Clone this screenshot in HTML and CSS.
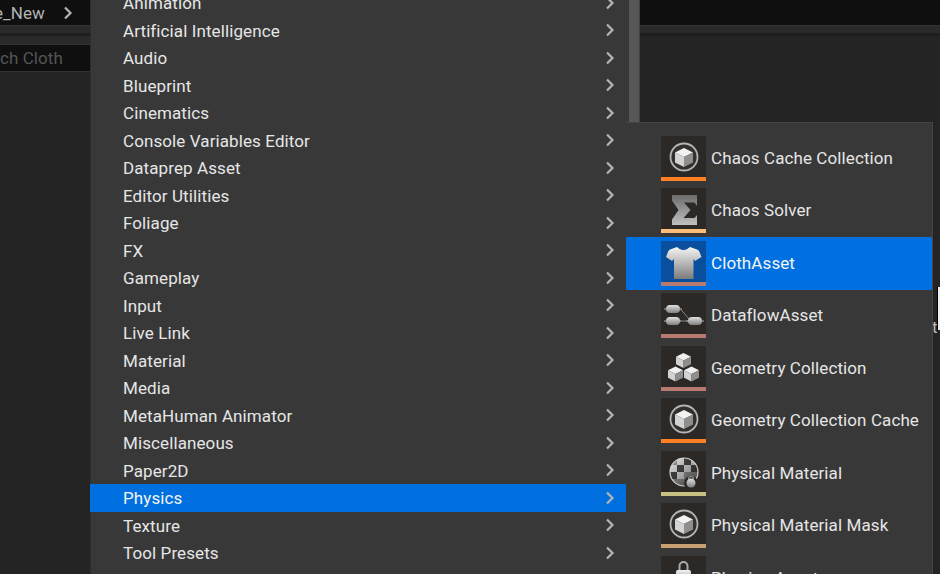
FILE: index.html
```html
<!DOCTYPE html>
<html lang="en">
<head>
<meta charset="UTF-8">
<title>Content Browser menu</title>
<link rel="stylesheet" href="styles.css">
</head>
<body>
<svg class="defs" width="0" height="0">
  <defs>
    <linearGradient id="grey" x1="0" y1="0" x2="0" y2="1">
      <stop offset="0" stop-color="#f4f4f4"/>
      <stop offset="1" stop-color="#7c7c7c"/>
    </linearGradient>
    <linearGradient id="sigma" x1="0" y1="0" x2="0" y2="1">
      <stop offset="0" stop-color="#6c6c6c"/>
      <stop offset="1" stop-color="#c0c0c0"/>
    </linearGradient>
    <linearGradient id="pill" x1="0" y1="0" x2="0" y2="1">
      <stop offset="0" stop-color="#e0e0e0"/>
      <stop offset="1" stop-color="#808080"/>
    </linearGradient>
    <linearGradient id="shade" x1="0" y1="0" x2="1" y2="1">
      <stop offset="0" stop-color="#000" stop-opacity="0"/>
      <stop offset="1" stop-color="#000" stop-opacity=".55"/>
    </linearGradient>
    <symbol id="chev" viewBox="0 0 10 14">
      <path d="M2 1.500 7.500 7 2 12.500" fill="none" stroke="#b4b4b4" stroke-width="2.200"/>
    </symbol>
    <symbol id="cube" viewBox="0 0 45 41">
      <circle cx="23" cy="21" r="13.500" fill="#34302e" stroke="#b4b4b4" stroke-width="1.800"/>
      <path d="M23 12 32 16.500 23 21 14 16.500Z" fill="#f2f2f2"/>
      <path d="M14 16.500 23 21V31L14 26.500Z" fill="#d4d4d4"/>
      <path d="M32 16.500 23 21V31L32 26.500Z" fill="#8e8e8e"/>
    </symbol>
    <symbol id="box" viewBox="1 1 14 14">
      <path d="M8 1 15 4.500 8 8 1 4.500Z" fill="#f0f0f0"/>
      <path d="M1 4.500 8 8V15L1 11.500Z" fill="#d2d2d2"/>
      <path d="M15 4.500 8 8V15L15 11.500Z" fill="#8e8e8e"/>
    </symbol>
  </defs>
</svg>

<div class="page">
  <div class="left-pane">
    <div class="path-bar"><span class="path-text">Cloth_Sample_New</span><svg class="path-chev"><use href="#chev"/></svg></div>
    <div class="strip"></div>
    <div class="search-wrap">
      <div class="search"><span>Search Cloth</span></div>
    </div>
  </div>
  <div class="gap"></div>
  <div class="right-pane">
    <div class="path-bar"></div>
    <div class="strip"></div>
    <div class="right-body">
      <div class="splitter"></div>
      <span class="clip-t">t</span>
    </div>
  </div>
</div>

<div class="menu">
  <div class="menu-list">
    <div class="row"><span>Animation</span><svg class="chev"><use href="#chev"/></svg></div>
    <div class="row"><span>Artificial Intelligence</span><svg class="chev"><use href="#chev"/></svg></div>
    <div class="row"><span>Audio</span><svg class="chev"><use href="#chev"/></svg></div>
    <div class="row"><span>Blueprint</span><svg class="chev"><use href="#chev"/></svg></div>
    <div class="row"><span>Cinematics</span><svg class="chev"><use href="#chev"/></svg></div>
    <div class="row"><span>Console Variables Editor</span><svg class="chev"><use href="#chev"/></svg></div>
    <div class="row"><span>Dataprep Asset</span><svg class="chev"><use href="#chev"/></svg></div>
    <div class="row"><span>Editor Utilities</span><svg class="chev"><use href="#chev"/></svg></div>
    <div class="row"><span>Foliage</span><svg class="chev"><use href="#chev"/></svg></div>
    <div class="row"><span>FX</span><svg class="chev"><use href="#chev"/></svg></div>
    <div class="row"><span>Gameplay</span><svg class="chev"><use href="#chev"/></svg></div>
    <div class="row"><span>Input</span><svg class="chev"><use href="#chev"/></svg></div>
    <div class="row"><span>Live Link</span><svg class="chev"><use href="#chev"/></svg></div>
    <div class="row"><span>Material</span><svg class="chev"><use href="#chev"/></svg></div>
    <div class="row"><span>Media</span><svg class="chev"><use href="#chev"/></svg></div>
    <div class="row"><span>MetaHuman Animator</span><svg class="chev"><use href="#chev"/></svg></div>
    <div class="row"><span>Miscellaneous</span><svg class="chev"><use href="#chev"/></svg></div>
    <div class="row"><span>Paper2D</span><svg class="chev"><use href="#chev"/></svg></div>
    <div class="row active"><span>Physics</span><svg class="chev"><use href="#chev"/></svg></div>
    <div class="row"><span>Texture</span><svg class="chev"><use href="#chev"/></svg></div>
    <div class="row"><span>Tool Presets</span><svg class="chev"><use href="#chev"/></svg></div>
  </div>
  <div class="scrollbar"></div>
</div>

<div class="submenu">
  <div class="asset">
    <div class="tile bar-orange"><svg class="art"><use href="#cube"/></svg></div>
    <span>Chaos Cache Collection</span>
  </div>
  <div class="asset">
    <div class="tile bar-peach">
      <svg class="art" viewBox="0 0 45 41">
        <path d="M11 7H36V18L33.500 14.500H23L29.500 22 22.500 30H33.500L36 27V37H11V31.500L17.500 22 11 12.500Z" fill="url(#sigma)"/>
      </svg>
    </div>
    <span>Chaos Solver</span>
  </div>
  <div class="asset active">
    <div class="tile tile-blue bar-rose">
      <svg class="art" viewBox="0 0 45 41">
        <path d="M16 6C19 9 26 9 29 6L36 8.500C37.500 9 38 10 38.500 11L40.500 16 34 20 32.500 18V38H13V18L11 20 5 16 7 11C7.500 10 8 9 9 8.500Z" fill="url(#grey)"/>
        <path d="M17 6C20 9.500 25 9.500 28 6" fill="none" stroke="#0b4f9e" stroke-width="1"/>
      </svg>
    </div>
    <span>ClothAsset</span>
  </div>
  <div class="asset">
    <div class="tile bar-rose">
      <svg class="art" viewBox="0 0 45 41">
        <path d="M19 15.500 29 27M18 28H28" fill="none" stroke="#8a8a8a" stroke-width="1"/>
        <path d="M3 16H21M3 28H20M25 28H43" stroke="#aaa" stroke-width="1.200"/>
        <rect x="5" y="12" width="14" height="8" rx="4" fill="url(#pill)"/>
        <rect x="5" y="24" width="14" height="8" rx="4" fill="url(#pill)"/>
        <rect x="27" y="24" width="14" height="8" rx="4" fill="url(#pill)"/>
      </svg>
    </div>
    <span>DataflowAsset</span>
  </div>
  <div class="asset">
    <div class="tile bar-rose">
      <svg class="art" viewBox="0 0 45 41">
        <use href="#box" x="15" y="7" width="15" height="15"/>
        <use href="#box" x="7" y="20" width="15" height="16"/>
        <use href="#box" x="23" y="20" width="15" height="16"/>
      </svg>
    </div>
    <span>Geometry Collection</span>
  </div>
  <div class="asset">
    <div class="tile bar-orange"><svg class="art"><use href="#cube"/></svg></div>
    <span>Geometry Collection Cache</span>
  </div>
  <div class="asset">
    <div class="tile bar-khaki">
      <svg class="art" viewBox="0 0 45 41">
        <clipPath id="ball"><circle cx="23" cy="21" r="14"/></clipPath>
        <g clip-path="url(#ball)">
          <rect x="9" y="7" width="28" height="28" fill="#9a9a9a"/>
          <path d="M16 7H23V14H16ZM30 7H37V14H30ZM9 14H16V21H9ZM23 14H30V21H23ZM16 21H23V28H16Z" fill="#e4e4e4"/>
          <path d="M23 7H30V14H23ZM16 14H23V21H16ZM30 14H37V21H30ZM9 21H16V28H9Z" fill="#4a4a4a"/>
          <rect x="9" y="7" width="28" height="28" fill="url(#shade)"/>
        </g>
        <circle cx="23" cy="21" r="14" fill="none" stroke="#d0d0d0" stroke-width="1.200"/>
        <circle cx="30" cy="32" r="7" fill="#2c2826"/>
        <path d="M27.500 28A2.500 2.500 0 0 1 32.500 28" fill="none" stroke="#999" stroke-width="1.200"/>
        <circle cx="30" cy="32" r="4.500" fill="url(#pill)"/>
      </svg>
    </div>
    <span>Physical Material</span>
  </div>
  <div class="asset">
    <div class="tile bar-tan"><svg class="art"><use href="#cube"/></svg></div>
    <span>Physical Material Mask</span>
  </div>
  <div class="asset">
    <div class="tile">
      <svg class="art" viewBox="0 0 45 41">
        <path d="M18.500 14V10A4 4 0 0 1 26.500 10V14" fill="none" stroke="#aaa" stroke-width="2"/>
        <rect x="15" y="14" width="15" height="14" rx="2" fill="url(#grey)"/>
      </svg>
    </div>
    <span>Physics Asset</span>
  </div>
</div>
</body>
</html>
```
FILE: styles.css
```css
* {
  box-sizing: border-box;
}

body {
  margin: 0;
  width: 940px;
  height: 574px;
  overflow: hidden;
  position: relative;
  background-color: #242424;
  font-family: Roboto, "Liberation Sans", sans-serif;
  font-size: 17px;
  letter-spacing: 0.1px;
  color: #e6e6e6;
}

.defs {
  display: block;
  position: absolute;
}

.page {
  display: flex;
  height: 574px;
}

.left-pane {
  width: 90px;
  flex-shrink: 0;
  overflow: hidden;
}

.gap {
  width: 550px;
  flex-shrink: 0;
}

.right-pane {
  flex: 1;
  display: flex;
  flex-direction: column;
  overflow: hidden;
}

.path-bar {
  height: 25px;
  display: flex;
  align-items: center;
  justify-content: flex-end;
  padding-right: 17px;
  background-color: #0f0f0f;
  color: #b4b4b4;
}

.path-text {
  margin-right: 18px;
  white-space: nowrap;
}

.path-chev {
  width: 10px;
  height: 14px;
  flex-shrink: 0;
}

.strip {
  height: 11px;
  border-top: 1px solid #333;
  border-bottom: 3px solid #1e1e1e;
  background-color: #2a2a2a;
}

.search-wrap {
  padding-top: 8px;
  background-color: #2a2a2a;
}

.search {
  height: 28px;
  display: flex;
  align-items: center;
  justify-content: flex-end;
  padding-right: 27px;
  background-color: #0f0f0f;
  border-top: 1px solid #333;
  border-bottom: 1px solid #333;
  color: #555;
  white-space: nowrap;
}

.right-body {
  flex: 1;
  display: flex;
  align-items: flex-start;
  justify-content: flex-end;
  position: relative;
}

.splitter {
  width: 2px;
  height: 43px;
  margin-top: 251px;
  background-color: #eee;
  box-shadow: -1px 0 0 #000;
}

.clip-t {
  position: absolute;
  left: 292px;
  top: 281px;
  color: #bbb;
}

/* popups sit over the browser panes */
.menu {
  position: absolute;
  left: 90px;
  top: -11px;
  width: 550px;
  height: 585px;
  display: flex;
  background-color: #383838;
  border-left: 1px solid #2e2e2e;
}

.menu-list {
  flex: 1;
}

.row {
  height: 27.5px;
  display: flex;
  align-items: center;
  justify-content: space-between;
  padding: 0 12px 0 32px;
  margin-right: 2px;
}

.row span {
  position: relative;
  top: 0.5px;
}

.row.active {
  background-color: #0070e0;
  color: #f4f4f4;
  margin-left: -1px;
  padding-left: 33px;
}

.chev {
  width: 10px;
  height: 14px;
}

.scrollbar {
  width: 11px;
  background-color: #575757;
  border-right: 1px solid #404040;
}

.submenu {
  position: absolute;
  left: 626px;
  top: 122px;
  width: 307px;
  height: 452px;
  overflow: hidden;
  padding-top: 9px;
  background-color: #383838;
  border-top: 1px solid #444;
  border-right: 1px solid #444;
}

.asset {
  height: 52.5px;
  display: flex;
  align-items: center;
  gap: 5px;
  padding-left: 35px;
  white-space: nowrap;
}

.asset span {
  position: relative;
  top: -0.3px;
}

.asset.active {
  background-color: #0070e0;
  color: #f4f4f4;
}

.tile {
  width: 45px;
  height: 45px;
  flex-shrink: 0;
  background-color: #2c2826;
  border-bottom: 4px solid transparent;
}

.tile-blue {
  background-color: #0a4f9e;
}

.art {
  display: block;
  width: 45px;
  height: 41px;
}

.bar-orange { border-bottom-color: #ff7f24; }
.bar-peach { border-bottom-color: #ffbd7a; }
.bar-rose { border-bottom-color: #b87a70; }
.bar-khaki { border-bottom-color: #c8c080; }
.bar-tan { border-bottom-color: #c8a070; }
```
